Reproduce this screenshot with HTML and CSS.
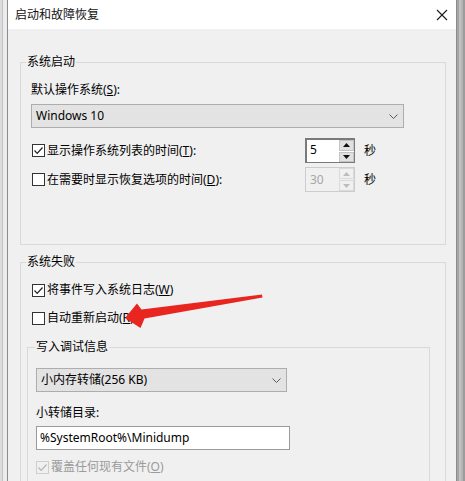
FILE: index.html
```html
<!DOCTYPE html>
<html lang="zh-CN">
<head>
<meta charset="utf-8">
<title>启动和故障恢复</title>
<link rel="stylesheet" href="styles.css">
</head>
<body>
<div class="screen">
  <div class="bgwin"></div>
  <div class="dialog">
    <div class="titlebar">
      <span class="title">启动和故障恢复</span>
      <svg class="close" width="12" height="12" viewBox="0 0 12 12"><path d="M1 1L11 11M11 1L1 11" stroke="#1a1a1a" stroke-width="1.1" fill="none"/></svg>
    </div>
    <div class="body">
      <fieldset class="group g1">
        <legend>系统启动</legend>
        <div class="label">默认操作系统(<u>S</u>):</div>
        <div class="combo wide">
          <span>Windows 10</span>
          <svg class="chev" width="9" height="5" viewBox="0 0 9 5"><path d="M0.5 0.5L4.5 4.5L8.5 0.5" stroke="#5a5a5a" stroke-width="1" fill="none"/></svg>
        </div>
        <div class="timerow">
          <div class="check"><span class="box"><svg width="11" height="11" viewBox="0 0 11 11"><path d="M1.5 5.5L4.2 8.3L9.5 2.5" stroke="#222" stroke-width="1.2" fill="none"/></svg></span>显示操作系统列表的时间(<u>T</u>):</div>
          <div class="spin">
            <div class="spin-input">5</div>
            <div class="spin-btns">
              <div class="spin-btn"><svg width="7" height="4" viewBox="0 0 7 4"><path d="M0 4L3.5 0L7 4Z" fill="#111"/></svg></div>
              <div class="spin-btn"><svg width="7" height="4" viewBox="0 0 7 4"><path d="M0 0L3.5 4L7 0Z" fill="#111"/></svg></div>
            </div>
          </div>
          <span class="unit">秒</span>
        </div>
        <div class="timerow second">
          <div class="check"><span class="box"></span>在需要时显示恢复选项的时间(<u>D</u>):</div>
          <div class="spin disabled">
            <div class="spin-input">30</div>
            <div class="spin-btns">
              <div class="spin-btn"><svg width="7" height="4" viewBox="0 0 7 4"><path d="M0 4L3.5 0L7 4Z" fill="#bdbdbd"/></svg></div>
              <div class="spin-btn"><svg width="7" height="4" viewBox="0 0 7 4"><path d="M0 0L3.5 4L7 0Z" fill="#bdbdbd"/></svg></div>
            </div>
          </div>
          <span class="unit">秒</span>
        </div>
      </fieldset>

      <fieldset class="group g2">
        <legend>系统失败</legend>
        <div class="check row"><span class="box"><svg width="11" height="11" viewBox="0 0 11 11"><path d="M1.5 5.5L4.2 8.3L9.5 2.5" stroke="#222" stroke-width="1.2" fill="none"/></svg></span>将事件写入系统日志(<u>W</u>)</div>
        <div class="check row r2"><span class="box"></span>自动重新启动(<u>R</u>)</div>

        <fieldset class="group g3">
          <legend>写入调试信息</legend>
          <div class="combo small">
            <span>小内存转储(256 KB)</span>
            <svg class="chev" width="9" height="5" viewBox="0 0 9 5"><path d="M0.5 0.5L4.5 4.5L8.5 0.5" stroke="#5a5a5a" stroke-width="1" fill="none"/></svg>
          </div>
          <div class="label l2">小转储目录:</div>
          <div class="input">%SystemRoot%\Minidump</div>
          <div class="check row r3 disabled"><span class="box"><svg width="11" height="11" viewBox="0 0 11 11"><path d="M1.5 5.5L4.2 8.3L9.5 2.5" stroke="#b5b5b5" stroke-width="1.2" fill="none"/></svg></span>覆盖任何现有文件(<u>O</u>)</div>
        </fieldset>
      </fieldset>
    </div>
  </div>
  <div class="shadow"></div>

  <svg class="arrow" width="465" height="481" viewBox="0 0 465 481">
    <path d="M125 318L137 303.5L141.5 309.5L262 294.5L262.5 297.5L144.5 318.5L140.5 328Z" fill="#e8251f"/>
  </svg>
</div>
</body>
</html>
```

FILE: styles.css
```css
body {
  margin: 0;
  font-family: "Noto Sans", "Noto Sans CJK SC", sans-serif;
  font-size: 12px;
  color: #000;
}

.screen {
  position: relative;
  width: 465px;
  height: 481px;
  overflow: hidden;
  display: flex;
  background: #f0f0f0;
}

.bgwin {
  width: 7px;
  flex: none;
  background: linear-gradient(to right, #dcdcdc 0 2px, #c4c4c4 2px 3px, #ececec 3px 7px);
}

.dialog {
  width: 448px;
  flex: none;
  border-left: 1px solid #8c8c8c;
  border-right: 1px solid #8c8c8c;
  background: #f0f0f0;
  display: flex;
  flex-direction: column;
}

.shadow {
  width: 8px;
  flex: none;
  background: linear-gradient(to right, #a4a4a4 0 2px, #c2c2c2 2px 4px, #b4b4b4 4px 6px, #9c9c9c 6px 8px);
}

.titlebar {
  height: 29px;
  flex: none;
  background: #fff;
  display: flex;
  align-items: center;
  justify-content: space-between;
  padding: 0 8px 0 7px;
}

.title {
  line-height: 16px;
  color: #111;
}

.close {
  display: block;
}

.body {
  padding: 25px 10px 0 12px;
}

.group {
  margin: 0;
  padding: 12px 10px 52px;
  border: 1px solid #d9d9d9;
  min-width: 0;
}

.group legend {
  padding: 0 1px;
  margin-left: -5px;
  line-height: 16px;
}

.g2 {
  margin-top: 9px;
  padding-bottom: 40px;
}

.g3 {
  margin: 13px 5px 0 -4px;
  padding: 13px 8px 30px;
}

.g3 legend {
  margin-left: -1px;
}

.label {
  line-height: 16px;
  height: 16px;
}

.combo {
  margin-top: 6px;
  height: 24px;
  box-sizing: border-box;
  border: 1px solid #adadad;
  background: #e3e3e3;
  display: flex;
  align-items: center;
  justify-content: space-between;
  padding: 0 5px 0 4px;
  line-height: 16px;
}

.combo.wide {
  width: 373px;
}

.combo.small {
  width: 251px;
  margin-top: 0;
}

.chev {
  display: block;
}

.timerow {
  display: grid;
  grid-template-columns: 265px 50px auto;
  column-gap: 9px;
  align-items: center;
  margin-top: 10px;
}

.timerow.second {
  margin-top: 4px;
}

.check {
  display: flex;
  align-items: center;
  line-height: 16px;
  height: 16px;
}

.box {
  width: 13px;
  height: 13px;
  box-sizing: border-box;
  border: 1px solid #333;
  background: #fff;
  margin: 0 2px 0 1px;
  display: flex;
  align-items: center;
  justify-content: center;
  flex: none;
}

.box svg {
  display: block;
}

.row.r2 {
  margin-top: 12px;
}

.row.r3 {
  margin-top: 9px;
}

.check.disabled {
  color: #9a9a9a;
}

.check.disabled .box {
  border-color: #cfcfcf;
  background: #f0f0f0;
  margin-left: 0;
}

.spin {
  display: flex;
  height: 25px;
  width: 50px;
  box-sizing: border-box;
  border: 1px solid #7a7a7a;
  border-left-width: 2px;
  border-top-width: 2px;
  background: #fff;
}

.spin-input {
  flex: 1;
  padding-left: 3px;
  line-height: 20px;
}

.spin-btns {
  width: 15px;
  display: flex;
  flex-direction: column;
  gap: 1px;
  padding: 0 0 0 1px;
}

.spin-btn {
  flex: 1;
  background: #e1e1e1;
  border: 1px solid #c4c4c4;
  display: flex;
  align-items: center;
  justify-content: center;
}

.spin-btn svg {
  display: block;
}

.spin.disabled {
  border: 1px solid #cccccc;
  background: #f0f0f0;
  color: #a6a6a6;
}

.spin.disabled .spin-input {
  padding-left: 4px;
  line-height: 23px;
}

.spin.disabled .spin-btn {
  background: #f0f0f0;
  border-color: #dadada;
}

.unit {
  line-height: 16px;
}

.l2 {
  margin-top: 13px;
}

.input {
  margin-top: 5px;
  width: 254px;
  height: 24px;
  box-sizing: border-box;
  border: 1px solid #9a9a9a;
  background: #fff;
  padding-left: 3px;
  line-height: 22px;
}

.arrow {
  position: absolute;
  left: 0;
  top: 0;
  pointer-events: none;
}
```
